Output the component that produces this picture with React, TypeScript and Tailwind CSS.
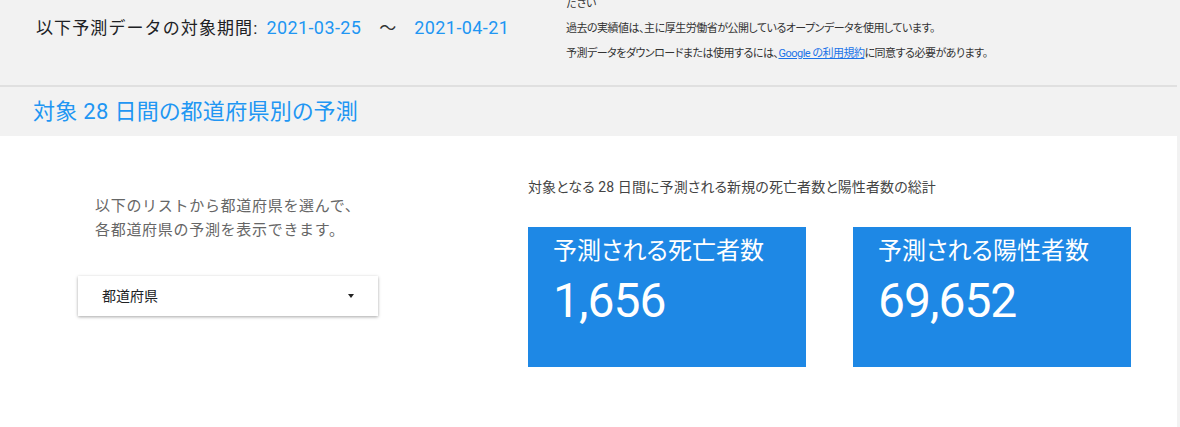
import React from 'react'

const jp = "font-['Roboto','Noto_Sans_CJK_JP',sans-serif]"

function StatCard({ label, value }: { label: string; value: string }) {
  return (
    <div className="w-[278px] h-[140px] bg-[#1e88e5] px-[25px] pt-[8px] text-white">
      <div className="text-[24px] leading-[32px] [font-feature-settings:'palt']">{label}</div>
      <div className="mt-[6px] text-[48px] leading-[56px] tracking-[-1px]">{value}</div>
    </div>
  )
}

export default function App() {
  return (
    <div className={`w-[1180px] h-[427px] overflow-hidden bg-[#f2f2f2] ${jp}`}>
      <div className="w-[1177px]">
        {/* 対象期間と注記 */}
        <div className="h-[85px] flex items-start">
          <div className="pl-[36px] pt-[16px] flex items-center text-[17px] leading-[24px] w-[566px] shrink-0">
            <span className="text-[#202124] tracking-[1.1px]">以下予測データの対象期間:</span>
            <span className="ml-[8px] text-[18px] tracking-[0.4px] text-[#2196f3]">2021-03-25</span>
            <span className="ml-[18px] text-[#333]">～</span>
            <span className="ml-[18px] text-[18px] tracking-[0.4px] text-[#2196f3]">2021-04-21</span>
          </div>
          <div className="-mt-[9px] text-[11px] leading-[25px] text-[#333] [font-feature-settings:'palt'] tracking-[-0.5px]">
            <p>ださい</p>
            <p>過去の実績値は、主に厚生労働省が公開しているオープンデータを使用しています。</p>
            <p>
              予測データをダウンロードまたは使用するには、
              <a href="#" className="text-[#1a73e8] underline">Google の利用規約</a>
              に同意する必要があります。
            </p>
          </div>
        </div>
        <div className="h-[2px] bg-[#e0e0e0]" />
        <div className="h-[49px] flex items-center pl-[33px]">
          <h2 className="text-[22px] text-[#2196f3] [font-feature-settings:'palt'] tracking-[0.3px]">対象 28 日間の都道府県別の予測</h2>
        </div>

        {/* 本体 */}
        <div className="h-[291px] bg-white flex">
          <div className="w-[528px] shrink-0 pl-[78px] pt-[58px]">
            <p className="pl-[17px] text-[15px] leading-[24px] text-[#666] tracking-[0.7px]">
              以下のリストから都道府県を選んで、
              <br />
              各都道府県の予測を表示できます。
            </p>
            <button className="mt-[34px] w-[300px] h-[40px] bg-white flex items-center justify-between pl-[24px] pr-[24px] shadow-[0_1px_3px_rgba(0,0,0,0.35)]">
              <span className="text-[14px] text-[#202124]">都道府県</span>
              <span className="w-0 h-0 border-l-[3px] border-r-[3px] border-t-[4px] border-l-transparent border-r-transparent border-t-[#222]" />
            </button>
          </div>
          <div className="pt-[40px]">
            <p className="text-[14px] leading-[22px] text-[#444] [font-feature-settings:'palt'] tracking-[0.1px]">
              対象となる 28 日間に予測される新規の死亡者数と陽性者数の総計
            </p>
            <div className="mt-[29px] flex gap-[47px]">
              <StatCard label="予測される死亡者数" value="1,656" />
              <StatCard label="予測される陽性者数" value="69,652" />
            </div>
          </div>
        </div>
      </div>
    </div>
  )
}
